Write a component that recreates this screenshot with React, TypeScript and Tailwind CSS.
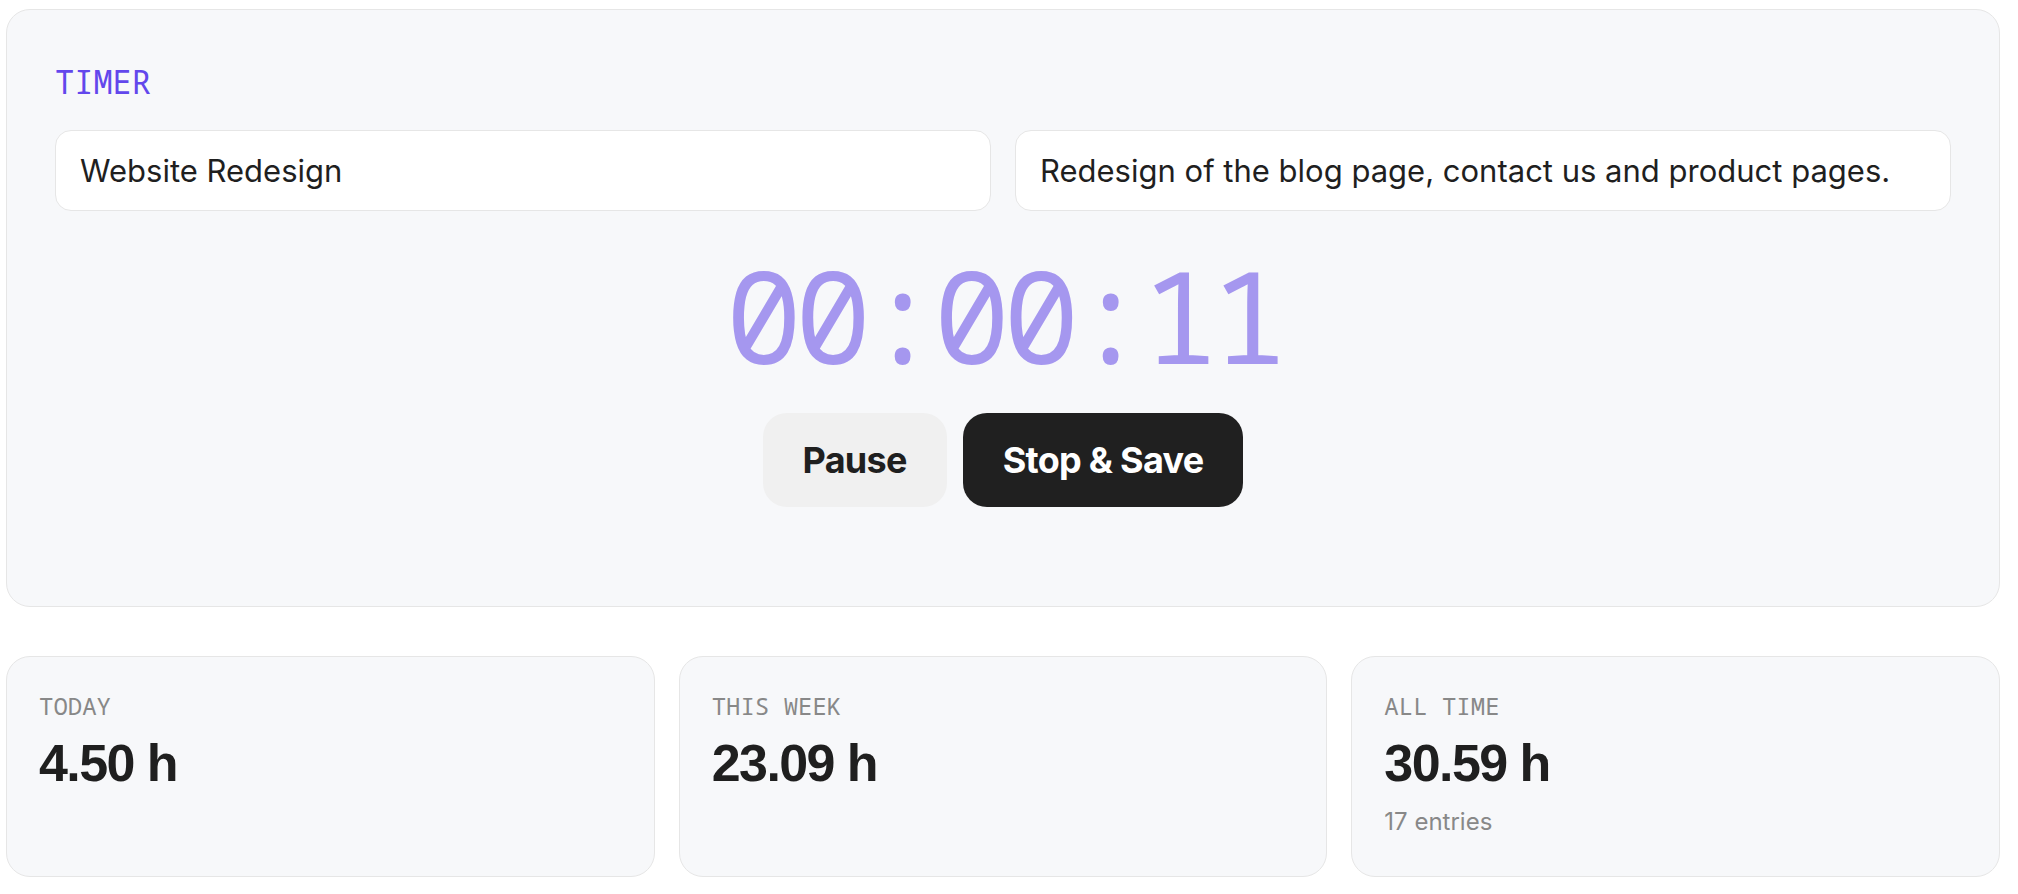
import React from "react";

function Stat({ label, value, sub }: { label: string; value: string; sub?: string }) {
  return (
    <div className="flex flex-col rounded-3xl border border-[#e6e6e6] bg-[#f7f8fa] px-8 pt-[33px] pb-[38px]">
      <div className="font-['Noto_Sans_Mono',monospace] text-2xl uppercase text-[#888888]">{label}</div>
      <div className="mt-[15px] font-['Liberation_Sans',Arial,sans-serif] text-[52px] font-bold leading-none tracking-[-0.03em] text-[#1f1f1f]">
        {value}
      </div>
      {sub && <div className="mt-[17px] text-2xl text-[#888888]">{sub}</div>}
    </div>
  );
}

export default function App() {
  return (
    <div className="min-h-screen bg-white pl-[6px] pr-[18px] pt-[9px] font-['Inter',sans-serif]">
      <div className="rounded-3xl border border-[#e6e6e6] bg-[#f7f8fa] px-12 pt-12 pb-[99px]">
        <div className="font-['Noto_Sans_Mono',monospace] text-[32px] leading-[48px] text-[#6247ec]">TIMER</div>
        <div className="mt-6 grid grid-cols-2 gap-6">
          <input
            readOnly
            value="Website Redesign"
            className="h-[81px] rounded-2xl border border-[#e6e6e6] bg-white px-6 text-[31px] text-[#1f1f1f] outline-none"
          />
          <input
            readOnly
            value="Redesign of the blog page, contact us and product pages."
            className="h-[81px] rounded-2xl border border-[#e6e6e6] bg-white px-6 text-[31px] text-[#1f1f1f] outline-none"
          />
        </div>
        <div className="mt-10 text-center font-['Noto_Sans_Mono',monospace] text-9xl leading-none tracking-[-0.058em] text-[#a597ef]">
          00:00:11
        </div>
        <div className="mt-[34px] flex justify-center gap-4">
          <button className="rounded-3xl bg-[#f0f0f0] px-10 py-5 text-[36px] font-bold leading-[54px] tracking-[-0.02em] text-[#1f1f1f]">
            Pause
          </button>
          <button className="rounded-3xl bg-[#202020] px-10 py-5 text-[36px] font-bold leading-[54px] tracking-[-0.02em] text-white">
            Stop &amp; Save
          </button>
        </div>
      </div>
      <div className="mt-[49px] grid grid-cols-3 gap-6">
        <Stat label="Today" value="4.50 h" />
        <Stat label="This week" value="23.09 h" />
        <Stat label="All time" value="30.59 h" sub="17 entries" />
      </div>
    </div>
  );
}
